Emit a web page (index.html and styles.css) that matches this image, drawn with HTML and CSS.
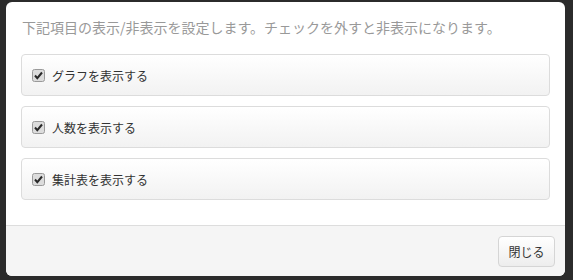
FILE: index.html
```html
<!DOCTYPE html>
<html lang="ja">
<head>
    <meta charset="UTF-8">
    <title>表示設定</title>
    <link rel="stylesheet" href="styles.css">
</head>
<body>
  <div class="modal">
    <div class="modal-body">
      <p class="note">下記項目の表示/非表示を設定します。チェックを外すと非表示になります。</p>

      <label class="option">
        <span class="check"><svg width="13" height="13" viewBox="0 0 13 13"><rect x="0.5" y="0.5" width="12" height="12" rx="2" fill="#dcdcdc" stroke="#9a9a9a"/><path d="M3 6.5 L5.3 9.2 L10 3.5" fill="none" stroke="#2a2a2a" stroke-width="2"/></svg></span>
        グラフを表示する
      </label>
      <label class="option">
        <span class="check"><svg width="13" height="13" viewBox="0 0 13 13"><rect x="0.5" y="0.5" width="12" height="12" rx="2" fill="#dcdcdc" stroke="#9a9a9a"/><path d="M3 6.5 L5.3 9.2 L10 3.5" fill="none" stroke="#2a2a2a" stroke-width="2"/></svg></span>
        人数を表示する
      </label>
      <label class="option">
        <span class="check"><svg width="13" height="13" viewBox="0 0 13 13"><rect x="0.5" y="0.5" width="12" height="12" rx="2" fill="#dcdcdc" stroke="#9a9a9a"/><path d="M3 6.5 L5.3 9.2 L10 3.5" fill="none" stroke="#2a2a2a" stroke-width="2"/></svg></span>
        集計表を表示する
      </label>
    </div>
    <div class="modal-footer">
      <button class="btn">閉じる</button>
    </div>
  </div>
</body>
</html>
```

FILE: styles.css
```css
body {
  margin: 0;
  background: #2b2b2b;
  font-family: "Noto Sans CJK JP", "Noto Sans", sans-serif;
}

.modal {
  margin: 2px 0 0 6px;
  width: 559px;
  height: 274px;
  background: #fff;
  border-radius: 6px;
  overflow: hidden;
  display: flex;
  flex-direction: column;
}

.modal-body {
  flex: 1;
  padding: 15px;
}

.note {
  margin: 0 0 17px 1px;
  padding-top: 1px;
  font-size: 14px;
  line-height: 19px;
  color: #999;
}

.option {
  display: flex;
  align-items: center;
  height: 40px;
  margin-bottom: 10px;
  padding-left: 10px;
  border: 1px solid #dcdcdc;
  border-radius: 4px;
  background: linear-gradient(#fff, #f2f2f2);
  font-size: 12px;
  color: #333;
}

.check {
  display: flex;
  margin-right: 7px;
}

.modal-footer {
  display: flex;
  justify-content: flex-end;
  height: 30px;
  padding: 10px;
  background: #f5f5f5;
  border-top: 1px solid #ddd;
}

.btn {
  width: 57px;
  height: 31px;
  border: 1px solid #d5d5d5;
  border-radius: 4px;
  background: linear-gradient(#fff, #ededed);
  font-family: inherit;
  font-size: 12px;
  color: #333;
}
```
